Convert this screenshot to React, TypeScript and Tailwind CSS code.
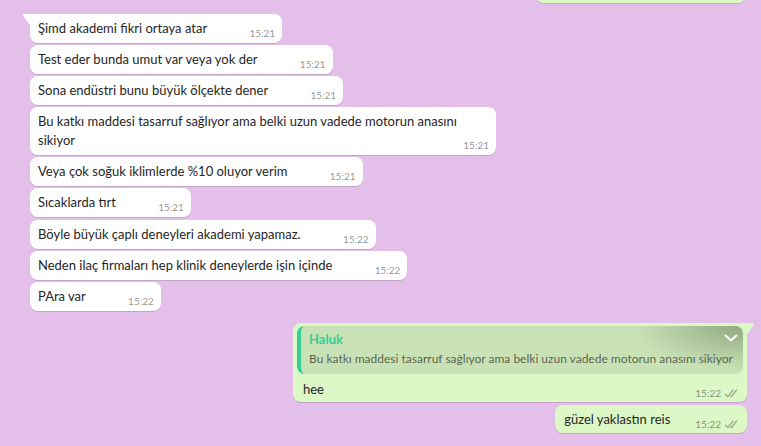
import React from 'react';

type Msg = { text: string; time: string };

const incoming: Msg[] = [
  { text: 'Şimd akademi fikri ortaya atar', time: '15:21' },
  { text: 'Test eder bunda umut var veya yok der', time: '15:21' },
  { text: 'Sona endüstri bunu büyük ölçekte dener', time: '15:21' },
  { text: 'Bu katkı maddesi tasarruf sağlıyor ama belki uzun vadede motorun anasını sikiyor', time: '15:21' },
  { text: 'Veya çok soğuk iklimlerde %10 oluyor verim', time: '15:21' },
  { text: 'Sıcaklarda tırt', time: '15:21' },
  { text: 'Böyle büyük çaplı deneyleri akademi yapamaz.', time: '15:22' },
  { text: 'Neden ilaç firmaları hep klinik deneylerde işin içinde', time: '15:22' },
  { text: 'PAra var', time: '15:22' },
];

function TailIn() {
  return (
    <svg viewBox="0 0 8 13" width="8" height="13" className="absolute left-[-8px] top-[-1px]">
      <path d="M1.533 3.568L8 12.193V1H2.812C1.042 1 .474 2.156 1.533 3.568z" fill="#ffffff" />
    </svg>
  );
}

function TailOut() {
  return (
    <svg viewBox="0 0 8 13" width="8" height="13" className="absolute right-[-8px] top-[-1px]">
      <path d="M5.188 1H0v11.193l6.467-8.625C7.526 2.156 6.958 1 5.188 1z" fill="#dcf8c6" />
    </svg>
  );
}

function Ticks() {
  return (
    <svg viewBox="0 0 16 15" width="14" height="13" className="ml-[3px] text-black/35">
      <path
        fill="currentColor"
        d="M15.01 3.316l-.478-.372a.365.365 0 0 0-.51.063L8.666 9.879a.32.32 0 0 1-.484.033l-.358-.325a.319.319 0 0 0-.484.032l-.378.483a.418.418 0 0 0 .036.541l1.32 1.266c.143.14.361.125.484-.033l6.272-8.048a.366.366 0 0 0-.064-.512zm-4.1 0l-.478-.372a.365.365 0 0 0-.51.063L4.566 9.879a.32.32 0 0 1-.484.033L1.891 7.769a.366.366 0 0 0-.515.006l-.423.433a.364.364 0 0 0 .006.514l3.258 3.185c.143.14.361.125.484-.033l6.272-8.048a.365.365 0 0 0-.063-.51z"
      />
    </svg>
  );
}

function InBubble({ m, first }: { m: Msg; first?: boolean }) {
  return (
    <div
      className={
        'relative max-w-[466px] bg-white pl-[8px] pr-[7px] pt-[5px] pb-[5px] text-[13px] leading-[19px] text-[#262626] shadow-[0_1px_0.5px_rgba(0,0,0,0.13)] ' +
        (first ? 'rounded-[7.5px] rounded-tl-none' : 'rounded-[7.5px]')
      }
    >
      {first && <TailIn />}
      <span>{m.text}</span>
      <span className="inline-block w-[68px]" />
      <span className="absolute right-[7px] bottom-[2px] text-[10px] leading-[15px] text-black/45">{m.time}</span>
    </div>
  );
}

export default function App() {
  return (
    <div className="w-[761px] h-[446px] overflow-hidden bg-[#e3bfe9] font-['Lato','Noto_Sans',sans-serif]">
      <div className="flex flex-col pl-[30px] pr-[14px]">
        <div className="self-end mr-[1px] mt-[-27px] h-[30px] w-[210px] rounded-[7.5px] bg-[#dcf8c6] shadow-[0_1px_0.5px_rgba(0,0,0,0.13)]" />

        <div className="mt-[11px] flex flex-col items-start gap-[2.1px]">
          {incoming.map((m, i) => (
            <InBubble key={i} m={m} first={i === 0} />
          ))}
        </div>

        <div className="mt-[12px] flex flex-col items-end gap-[3px]">
          <div className="relative w-[454px] rounded-[7.5px] rounded-tr-none bg-[#dcf8c6] p-[3px] pb-0 shadow-[0_1px_0.5px_rgba(0,0,0,0.13)]">
            <TailOut />
            <div className="relative mx-[1px] overflow-hidden rounded-[7.5px] bg-[#c9e2b5] border-l-4 border-[#35cd96] pl-[8px] pr-[10px] pt-[3px] pb-[6px]">
              <div className="absolute right-0 top-0 h-[48px] w-[120px] bg-[radial-gradient(at_top_right,rgba(40,60,30,0.35)_0%,rgba(40,60,30,0)_65%)]" />
              <svg viewBox="0 0 14 8" width="14" height="8" className="absolute right-[5px] top-[8px]">
                <path d="M1.5 1.5l5.5 5 5.5-5" fill="none" stroke="#ffffff" strokeWidth="2" strokeLinecap="round" strokeLinejoin="round" />
              </svg>
              <div className="text-[13px] leading-[20px] font-bold text-[#35cd96]">Haluk</div>
              <div className="text-[12px] leading-[19px] text-black/60 whitespace-nowrap">
                Bu katkı maddesi tasarruf sağlıyor ama belki uzun vadede motorun anasını sikiyor
              </div>
            </div>
            <div className="flex items-end justify-between pl-[7px] pr-[6px] pt-[6px] pb-[3px]">
              <span className="text-[13px] leading-[19px] text-[#262626]">hee</span>
              <span className="flex items-center text-[10px] leading-[15px] text-black/45 translate-y-[2px]">
                15:22
                <Ticks />
              </span>
            </div>
          </div>

          <div className="relative flex items-end rounded-[7.5px] bg-[#dcf8c6] pl-[9px] pr-[9px] pt-[5px] pb-[4px] shadow-[0_1px_0.5px_rgba(0,0,0,0.13)]">
            <span className="text-[13px] leading-[19px] text-[#262626]">güzel yaklastın reis</span>
            <span className="ml-[25px] flex items-center text-[10px] leading-[15px] text-black/45 translate-y-[3px]">
              15:22
              <Ticks />
            </span>
          </div>
        </div>
      </div>
    </div>
  );
}
